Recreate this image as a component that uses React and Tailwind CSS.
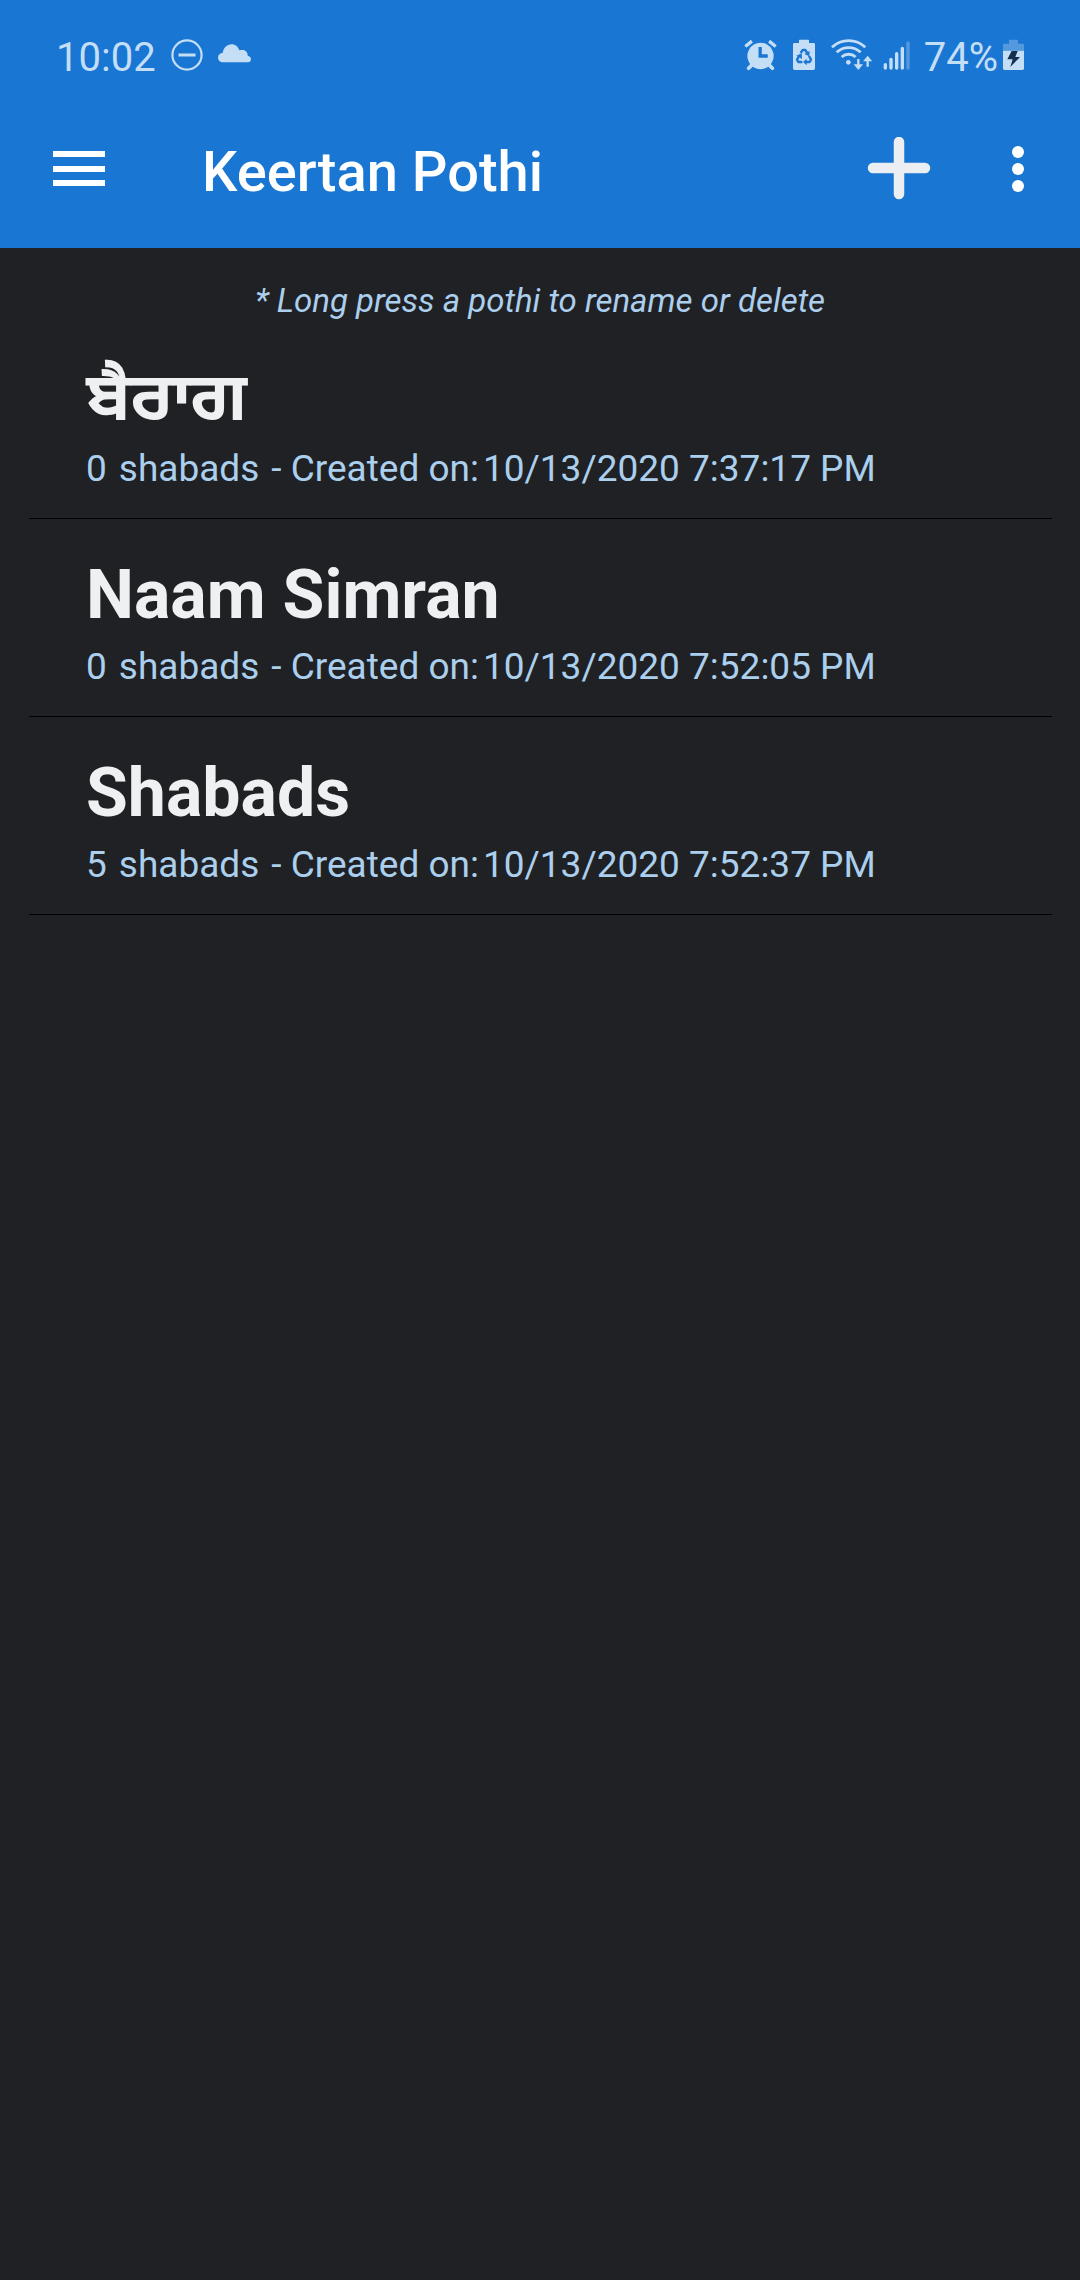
const pothis = [
  { name: 'ਬੈਰਾਗ', lang: 'pa', count: 0, created: '10/13/2020 7:37:17 PM' },
  { name: 'Naam Simran', lang: 'en', count: 0, created: '10/13/2020 7:52:05 PM' },
  { name: 'Shabads', lang: 'en', count: 5, created: '10/13/2020 7:52:37 PM' },
];

function DoNotDisturbIcon() {
  return (
    <svg className="h-8 w-8" viewBox="0 0 32 32" fill="none" stroke="currentColor" aria-hidden="true">
      <circle cx="16" cy="16" r="14.6" strokeWidth="2.2" />
      <path d="M7.5 16h17" strokeWidth="3" />
    </svg>
  );
}

function CloudIcon() {
  return (
    <svg className="h-8 w-[33px]" viewBox="0 0 99 96" fill="currentColor" aria-hidden="true">
      <path d="M14 70A14 14 0 0 1 14 42C16 28 27 16 41 16C52 16 60 23 64 34C66 33 70 33 74 33C83 33 89 40 89 50C95 51 99 55 99 61C99 66 95 70 90 70Z" />
    </svg>
  );
}

function AlarmIcon() {
  return (
    <svg className="h-8 w-[33px]" viewBox="0 0 100 96" fill="none" stroke="currentColor" aria-hidden="true">
      <path d="M4 22 24 6M96 22 76 6" strokeWidth="10" />
      <path d="M24 78 14 88M76 78 86 88" strokeWidth="11" strokeLinecap="round" />
      <path
        d="M50 11a40 40 0 1 0 .1 0ZM44 24h10v22h18v10H44Z"
        fill="currentColor"
        fillRule="evenodd"
        stroke="none"
      />
    </svg>
  );
}

function BatterySaverIcon() {
  return (
    <svg className="h-8 w-6" viewBox="0 0 72 96" aria-hidden="true">
      <path
        fill="currentColor"
        d="M21 4q0-2 2-2h26q2 0 2 2v8h14q4 0 4 4v72q0 5-5 5H8q-5 0-5-5V16q0-4 4-4h14Z"
      />
      <g fill="none" stroke="#1976d2" strokeWidth="7" strokeLinejoin="round">
        <path d="M26 42 32 33h8l7 11" />
        <path d="m51 51 6 11-4 7H41" />
        <path d="M31 69H19l-4-7 7-12" />
      </g>
      <path fill="#1976d2" d="m53 36-1 16-15-7ZM44 59v20l-11-10ZM13 50l16-7 1 17Z" />
    </svg>
  );
}

function WifiIcon() {
  return (
    <svg className="h-8 w-[41px]" viewBox="0 0 123 96" fill="none" stroke="currentColor" aria-hidden="true">
      <path d="M3 25C31-2 75-2 103 25M17 40c20-19 52-19 72 0M32 54c12-11 30-11 42 0" strokeWidth="8.5" />
      <circle cx="52" cy="70" r="7" fill="currentColor" stroke="none" />
      <path d="M82 60v26M110 83V60" strokeWidth="7" />
      <path d="M68 76h28L82 93ZM96 67h28L110 50Z" fill="currentColor" stroke="none" />
    </svg>
  );
}

function SignalIcon() {
  return (
    <svg className="h-8 w-7" viewBox="0 0 84 96" fill="none" stroke="currentColor" strokeWidth="10" strokeLinecap="round" aria-hidden="true">
      <path d="M7 77v10M24 61v26M41 44v43M58 28v59" />
      <path d="M75 12v75" opacity="0.35" />
    </svg>
  );
}

function ChargingIcon() {
  return (
    <svg className="h-8 w-[21px]" viewBox="0 0 63 96" aria-hidden="true">
      <path fill="currentColor" opacity="0.35" d="M18 4q0-2 2-2h23q2 0 2 2v10h14q4 0 4 4v17H0V18q0-4 4-4h14Z" />
      <path fill="currentColor" d="M0 35h63v53q0 5-5 5H5q-5 0-5-5Z" />
      <path fill="#14304e" d="M26 36h18l-7 18h14L22 84l7-23H13Z" />
    </svg>
  );
}

function StatusBar() {
  return (
    <div className="flex h-[90px] items-center justify-between px-14 pt-5 text-[40px] leading-none text-[#c4def6]">
      <div className="flex items-center gap-[15px]">
        <span className="pt-1.5">10:02</span>
        <DoNotDisturbIcon />
        <CloudIcon />
      </div>
      <div className="flex items-center">
        <div className="flex items-center gap-[15px]">
          <AlarmIcon />
          <BatterySaverIcon />
          <div className="flex gap-[11px]">
            <WifiIcon />
            <SignalIcon />
          </div>
        </div>
        <span className="pt-1.5 pr-[5px] pl-[13px]">74%</span>
        <ChargingIcon />
      </div>
    </div>
  );
}

function AppBar() {
  return (
    <div className="flex h-[158px] items-center text-white">
      <button type="button" aria-label="Open menu" className="ml-[53px]">
        <svg className="h-9 w-[52px]" viewBox="0 0 52 36" fill="currentColor" aria-hidden="true">
          <path d="M0 0h52v6H0zM0 15h52v6H0zM0 29h52v6H0z" />
        </svg>
      </button>
      <h1 className="ml-[97px] grow pt-1.5 text-[56px] leading-[64px] font-medium">Keertan Pothi</h1>
      <button type="button" aria-label="Add pothi" className="mr-[69px] text-[#eceff1]">
        <svg className="h-16 w-16" viewBox="0 0 64 64" stroke="currentColor" strokeWidth="10.5" strokeLinecap="round" aria-hidden="true">
          <path d="M32 5v52M6 31h52" />
        </svg>
      </button>
      <button type="button" aria-label="More options" className="mr-11">
        <svg className="h-12 w-9" viewBox="0 0 36 48" fill="currentColor" aria-hidden="true">
          <circle cx="18" cy="7" r="6" />
          <circle cx="18" cy="24" r="6" />
          <circle cx="18" cy="41" r="6" />
        </svg>
      </button>
    </div>
  );
}

function PothiRow({ name, lang, count, created }) {
  return (
    <li className="h-[198px] border-b border-black pt-9 pl-[57px]">
      <h2 lang={lang} className="h-20 text-[68px] leading-[80px] font-bold text-[#eff0f2]">
        {name}
      </h2>
      <p className="flex gap-1 pt-2.5 text-[37px] leading-[44px] text-[#abcfed]">
        <span className="pr-2">{count}</span>
        <span>shabads</span>
        <span className="pl-2">- Created on:</span>
        <span>{created}</span>
      </p>
    </li>
  );
}

export default function App() {
  return (
    <div className="min-h-screen bg-[#202124] font-['Roboto','Noto_Sans_Gurmukhi','Noto_Sans',sans-serif]">
      <header className="bg-[#1976d2]">
        <StatusBar />
        <AppBar />
      </header>
      <main>
        <p className="pt-8 text-center text-[33px] leading-[41px] text-[#abcfed] italic">
          * Long press a pothi to rename or delete
        </p>
        <ul className="mr-7 ml-[29px]">
          {pothis.map((pothi) => (
            <PothiRow key={pothi.created} {...pothi} />
          ))}
        </ul>
      </main>
    </div>
  );
}
